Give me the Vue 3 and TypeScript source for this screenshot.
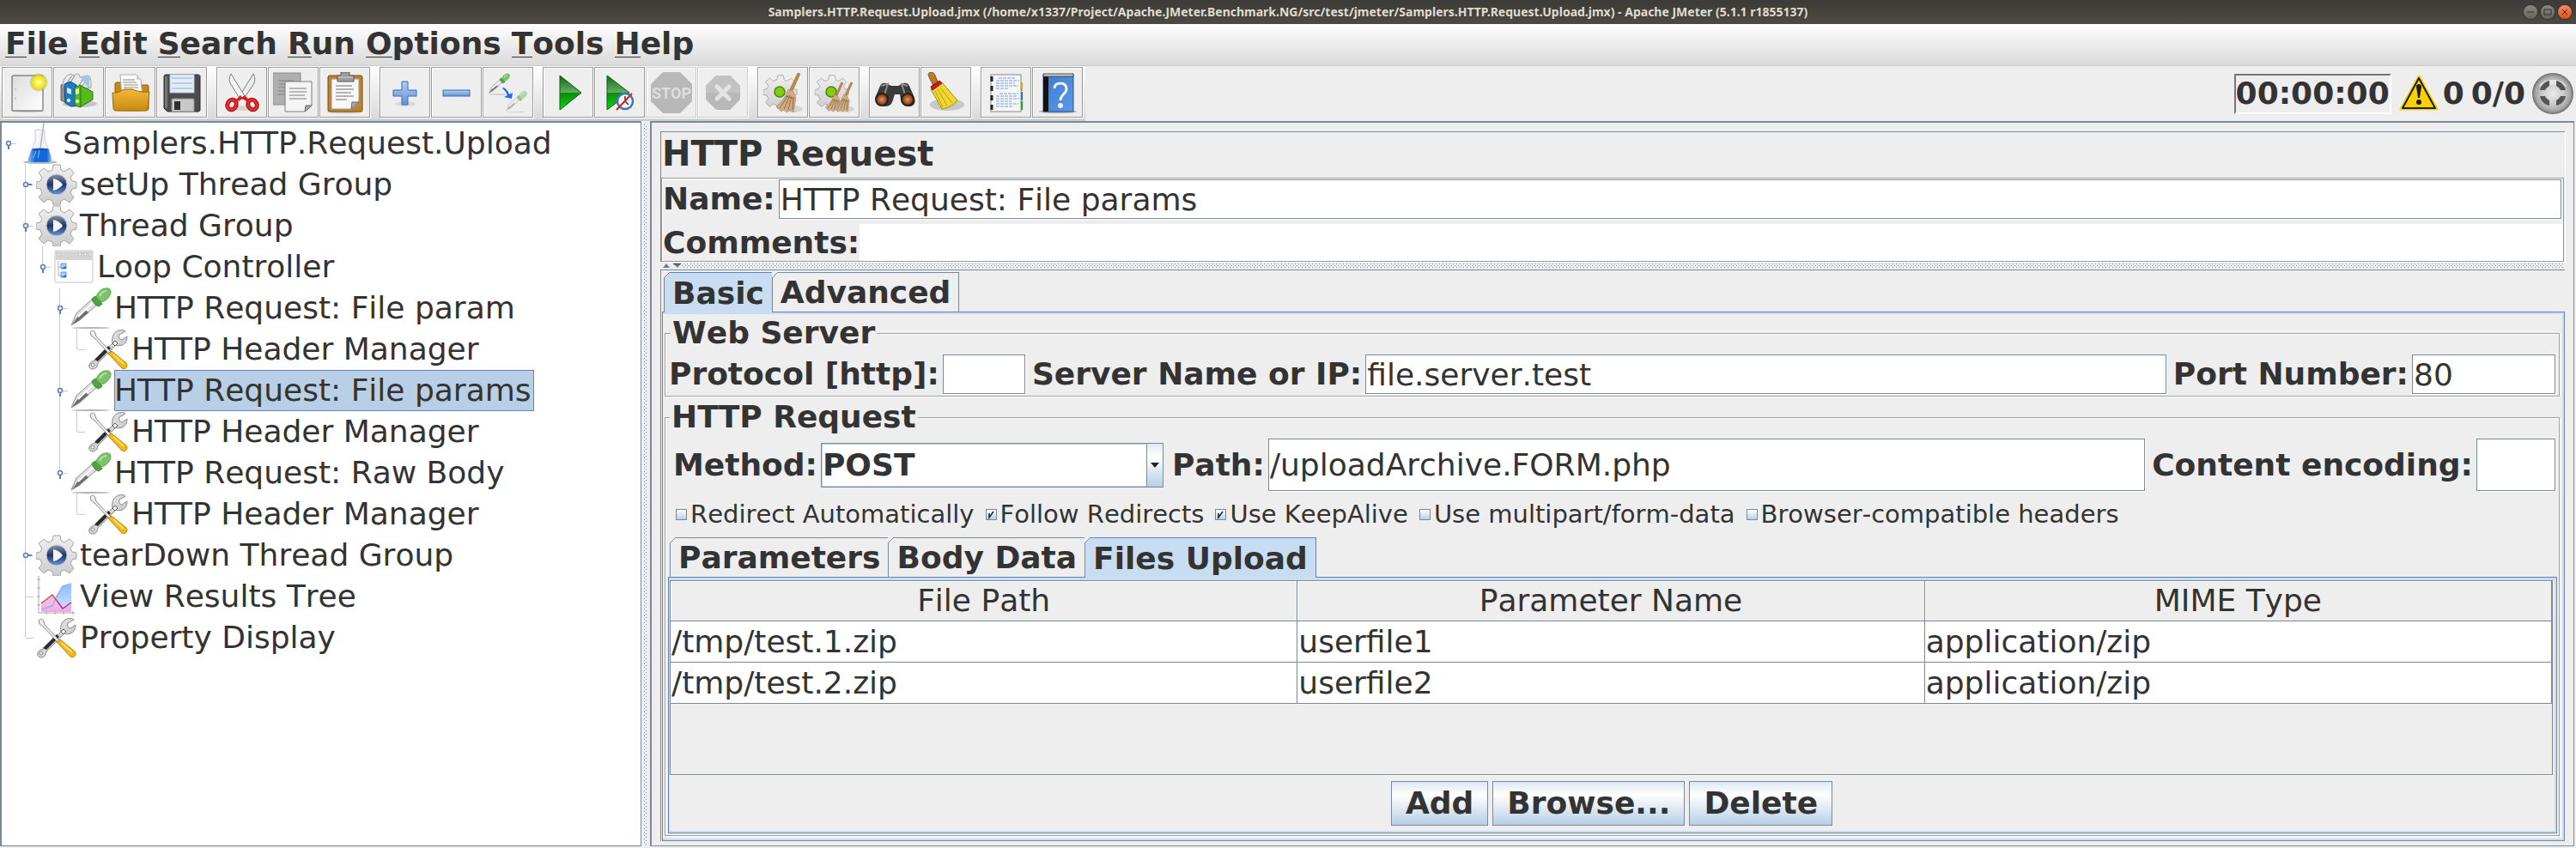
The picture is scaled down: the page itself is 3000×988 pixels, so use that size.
<script setup lang="ts">
import { computed, ref } from 'vue'

interface TreeNode {
  label: string
  depth: number
  icon: string
  handle?: 'open' | 'closed'
}

interface Tool {
  id: string
  title: string
  disabled?: boolean
}

const title =
  'Samplers.HTTP.Request.Upload.jmx (/home/x1337/Project/Apache.JMeter.Benchmark.NG/src/test/jmeter/Samplers.HTTP.Request.Upload.jmx) - Apache JMeter (5.1.1 r1855137)'

const menus = ['File', 'Edit', 'Search', 'Run', 'Options', 'Tools', 'Help']

const toolGroups: Tool[][] = [
  [
    { id: 'new', title: 'New' },
    { id: 'templates', title: 'Templates' },
    { id: 'open', title: 'Open' },
    { id: 'save', title: 'Save' },
  ],
  [
    { id: 'cut', title: 'Cut' },
    { id: 'copy', title: 'Copy' },
    { id: 'paste', title: 'Paste' },
  ],
  [
    { id: 'expand', title: 'Expand All' },
    { id: 'collapse', title: 'Collapse All' },
    { id: 'toggle', title: 'Toggle' },
  ],
  [
    { id: 'start', title: 'Start' },
    { id: 'start-nt', title: 'Start no pauses' },
    { id: 'stop', title: 'Stop', disabled: true },
    { id: 'shutdown', title: 'Shutdown', disabled: true },
  ],
  [
    { id: 'clear', title: 'Clear' },
    { id: 'clear-all', title: 'Clear All' },
  ],
  [
    { id: 'search', title: 'Search' },
    { id: 'reset', title: 'Reset Search' },
  ],
  [
    { id: 'functions', title: 'Function Helper Dialog' },
    { id: 'help', title: 'Help' },
  ],
]

const nodes: TreeNode[] = [
  { label: 'Samplers.HTTP.Request.Upload', depth: 0, icon: 'flask', handle: 'open' },
  { label: 'setUp Thread Group', depth: 1, icon: 'gear', handle: 'closed' },
  { label: 'Thread Group', depth: 1, icon: 'gear', handle: 'open' },
  { label: 'Loop Controller', depth: 2, icon: 'loop', handle: 'open' },
  { label: 'HTTP Request: File param', depth: 3, icon: 'dropper', handle: 'open' },
  { label: 'HTTP Header Manager', depth: 4, icon: 'wrench' },
  { label: 'HTTP Request: File params', depth: 3, icon: 'dropper', handle: 'open' },
  { label: 'HTTP Header Manager', depth: 4, icon: 'wrench' },
  { label: 'HTTP Request: Raw Body', depth: 3, icon: 'dropper', handle: 'open' },
  { label: 'HTTP Header Manager', depth: 4, icon: 'wrench' },
  { label: 'tearDown Thread Group', depth: 1, icon: 'gear', handle: 'closed' },
  { label: 'View Results Tree', depth: 1, icon: 'chart' },
  { label: 'Property Display', depth: 1, icon: 'wrench' },
]

const selected = ref(6)

// True when a sibling of the branch at this level follows further down the tree.
function continues(index: number, level: number): boolean {
  for (let i = index + 1; i < nodes.length; i++) {
    if (nodes[i].depth < level) return false
    if (nodes[i].depth === level) return true
  }
  return false
}

// End of the vertical guide in each indent column; 0 leaves the column empty.
const rows = computed(() =>
  nodes.map((node, index) => ({
    ...node,
    guides: Array.from({ length: node.depth + 1 }, (_, level) => {
      if (level === 0) return 0
      if (continues(index, level)) return 48
      return level === node.depth ? 24 : 0
    }),
  })),
)

const name = ref('HTTP Request: File params')
const comments = ref('')
const protocol = ref('')
const server = ref('file.server.test')
const port = ref('80')
const method = ref('POST')
const path = ref('/uploadArchive.FORM.php')
const encoding = ref('')

const options = ref([
  { id: 'redirect', label: 'Redirect Automatically', checked: false },
  { id: 'follow', label: 'Follow Redirects', checked: true },
  { id: 'keepalive', label: 'Use KeepAlive', checked: true },
  { id: 'multipart', label: 'Use multipart/form-data', checked: false },
  { id: 'browser', label: 'Browser-compatible headers', checked: false },
])

const mainTabs = ['Basic', 'Advanced']
const mainTab = ref('Basic')
const dataTabs = ['Parameters', 'Body Data', 'Files Upload']
const dataTab = ref('Files Upload')

const columns = ['File Path', 'Parameter Name', 'MIME Type']
const files = [
  ['/tmp/test.1.zip', 'userfile1', 'application/zip'],
  ['/tmp/test.2.zip', 'userfile2', 'application/zip'],
]
</script>

<template>
  <div class="window">
    <svg class="defs" aria-hidden="true">
      <defs>
        <linearGradient id="g-paper" x1="0" y1="0" x2="1" y2="1">
          <stop offset="0" stop-color="#dcdcdc" /><stop offset="1" stop-color="#fff" />
        </linearGradient>
        <radialGradient id="g-sun">
          <stop offset="0" stop-color="#fff" /><stop offset=".35" stop-color="#fdf53a" />
          <stop offset=".7" stop-color="#e8dc20" /><stop offset="1" stop-color="#8a8a60" stop-opacity="0" />
        </radialGradient>
        <linearGradient id="g-folder" x1="0" y1="0" x2="0" y2="1">
          <stop offset="0" stop-color="#f2b83c" /><stop offset="1" stop-color="#c98a0c" />
        </linearGradient>
        <linearGradient id="g-blue" x1="0" y1="0" x2="0" y2="1">
          <stop offset="0" stop-color="#b4cdec" /><stop offset="1" stop-color="#5f94d4" />
        </linearGradient>
        <linearGradient id="g-green" x1="0" y1="0" x2="0" y2="1">
          <stop offset="0" stop-color="#0d6b16" /><stop offset=".49" stop-color="#5fae5f" />
          <stop offset=".5" stop-color="#0a8a0f" /><stop offset="1" stop-color="#12d40c" />
        </linearGradient>
        <linearGradient id="g-metal" x1="0" y1="0" x2="1" y2="1">
          <stop offset="0" stop-color="#f8f8f8" /><stop offset="1" stop-color="#b4b4b4" />
        </linearGradient>
        <linearGradient id="g-cog" x1="0" y1="0" x2="0" y2="1">
          <stop offset="0" stop-color="#f0f0f0" /><stop offset="1" stop-color="#cccccc" />
        </linearGradient>
        <linearGradient id="g-navy" x1="0" y1="0" x2="0" y2="1">
          <stop offset="0" stop-color="#8c94a8" /><stop offset=".5" stop-color="#1c3468" />
          <stop offset="1" stop-color="#6c98dc" />
        </linearGradient>
        <linearGradient id="g-area" x1="0" y1="0" x2="0" y2="1">
          <stop offset="0" stop-color="#8cbcff" /><stop offset="1" stop-color="#d4e8ff" />
        </linearGradient>
        <linearGradient id="g-pink" x1="0" y1="0" x2="0" y2="1">
          <stop offset="0" stop-color="#f8c8d8" /><stop offset="1" stop-color="#f4a8f0" />
        </linearGradient>
        <radialGradient id="g-disc" cx=".5" cy=".5" r=".5">
          <stop offset="0" stop-color="#ececec" /><stop offset=".6" stop-color="#c4c4c4" />
          <stop offset=".85" stop-color="#a4a4a4" /><stop offset="1" stop-color="#6c6c6c" />
        </radialGradient>
        <linearGradient id="g-liquid" x1="0" y1="0" x2="1" y2="0">
          <stop offset="0" stop-color="#8cbcf4" /><stop offset=".3" stop-color="#1468dc" />
          <stop offset=".8" stop-color="#1468dc" /><stop offset="1" stop-color="#8cbcf4" />
        </linearGradient>
        <radialGradient id="g-lens">
          <stop offset="0" stop-color="#e89058" /><stop offset="1" stop-color="#7a2c0c" />
        </radialGradient>
        <linearGradient id="g-book" x1="0" y1="0" x2="1" y2="1">
          <stop offset="0" stop-color="#3a7ad0" /><stop offset="1" stop-color="#5c9ae8" />
        </linearGradient>
      </defs>

      <symbol id="i-cog" viewBox="0 0 48 48">
        <path d="M20 1h8l1 6 4 2 6-4 5 5-4 6 2 4 5 1v7l-5 1-2 5 4 5-5 6-6-4-4 2-1 5h-8l-1-5-5-2-5 4-6-6 4-5-2-5-5-1v-7l5-1 2-4-4-6 6-5 5 4 5-2z" fill="url(#g-cog)" stroke="#a4a4a4" />
      </symbol>
      <symbol id="i-gear" viewBox="0 0 48 48">
        <use href="#i-cog" />
        <circle cx="24" cy="24" r="12" fill="url(#g-navy)" stroke="#c8ccd4" />
        <path d="M20 17c5 1 9 4 11 7-2 3-6 6-11 7z" fill="#f4f4f8" />
      </symbol>
      <symbol id="i-flask" viewBox="0 0 48 48">
        <ellipse cx="25" cy="46" rx="20" ry="2" fill="#b8b8b8" />
        <path d="M19 8h11v12l8 22c0 3-2 4-5 4H15c-3 0-5-1-4-4l8-22z" fill="#f0f3f6" stroke="#ccd2d8" />
        <path d="M15 31h20l3 11c0 3-2 4-5 4H15c-3 0-5-1-4-4z" fill="url(#g-liquid)" />
        <ellipse cx="25" cy="31" rx="10" ry="1.5" fill="#1458a8" />
        <path d="M29 0l-4 30" stroke="#b4b4b4" stroke-width="1.5" />
        <path d="M20 33l-3 8M24 32l-2 9" stroke="#8cc0ff" />
        <path d="M22 10v12" stroke="#fff" stroke-width="2" />
      </symbol>
      <symbol id="i-loop" viewBox="0 0 48 48">
        <rect x="2" y="5" width="44" height="37" rx="1" fill="#fff" stroke="#c4c4c4" />
        <path d="M3 6h42v10H3z" fill="#d4d4d4" />
        <path d="M5 8h4l-2 4zM29 8h4l-2 4zM35 8h4l-2 4zM41 8h4l-2 4z" fill="#f4f4f4" stroke="#aaa" stroke-width=".5" />
        <path d="M6 17v17h3M6 24h3" fill="none" stroke="#b4b4b4" />
        <path d="M9 20h6v6H9zM9 30h6v6H9z" fill="#a8ccf8" stroke="#6c9cd8" />
        <path d="M9 26l6-3v3zM9 36l6-3v3z" fill="#1c6cdc" />
      </symbol>
      <symbol id="i-dropper" viewBox="0 0 48 48">
        <ellipse cx="24" cy="47" rx="22" ry="1" fill="#b4b4b4" />
        <path d="M1 44l6-14 19-17 6 6-21 19z" fill="#e0e0e0" stroke="#8c8c8c" />
        <path d="M2 43l8-11 7-6 4 3-12 10z" fill="#6c6c6c" />
        <path d="M9 34l18-17" stroke="#fff" stroke-width="2" />
        <path d="M25 13l4-3 8 9-4 3c-4-1-7-5-8-9z" fill="#4ca440" stroke="#3a8c32" />
        <path d="M30 11c2-6 7-11 14-10 3 1 4 4 2 8-2 4-6 7-10 8z" fill="#7cc46c" stroke="#5aa44c" />
        <path d="M34 10c2-4 5-6 8-6" stroke="#b8e0ac" stroke-width="2" fill="none" />
      </symbol>
      <symbol id="i-wrench" viewBox="0 0 48 48">
        <path d="M2 42c1-3 4-5 7-5l20-20c-1-5 0-11 5-14 4-2 8-2 10 0l-7 4c-1 3 0 5 3 6l6-4c0 5-2 9-6 10-3 1-5 1-7 0L12 40c0 4-3 7-6 7-3 0-5-2-4-5z" fill="url(#g-metal)" stroke="#888" />
        <path d="M8 36l16-16 3 3-15 15z" fill="#2c2c2c" />
        <path d="M29 17l3-3 3 3-3 3z" fill="#fff" stroke="#555" />
        <circle cx="6" cy="42" r="2" fill="#fff" stroke="#888" />
        <path d="M3 4c2-3 5-2 6 1l1 4 17 18-2 2L8 11 4 8z" fill="#ececec" stroke="#8c8c8c" />
        <path d="M24 29l4-3 17 14c3 4-1 8-5 6z" fill="#f4b814" stroke="#b88408" />
        <path d="M30 30l12 11" stroke="#fce070" stroke-width="2" />
      </symbol>
      <symbol id="i-chart" viewBox="0 0 48 48">
        <path d="M6 40l13-6 5-12 8-10 9-2v32H6z" fill="url(#g-area)" />
        <path d="M6 32l13-10 12 16 10-7v11H6z" fill="url(#g-pink)" />
        <path d="M6 39l13-4 5-11 7-12 10-3" fill="none" stroke="#8cb4f4" stroke-width="1.5" />
        <path d="M6 32l13-10 6 8" fill="none" stroke="#d04868" stroke-width="1.5" />
        <path d="M25 30l6 8 10-7" fill="none" stroke="#b828a0" stroke-width="1.5" />
        <path d="M3 0v43h42M1 4h4M1 14h4M1 24h4M1 34h4M12 41v4M22 41v4M32 41v4M43 41v4" fill="none" stroke="#a8a8a8" />
      </symbol>

      <symbol id="i-new" viewBox="0 0 48 48">
        <ellipse cx="24" cy="45" rx="19" ry="2" fill="#ccc" />
        <rect x="6" y="4" width="36" height="41" rx="1" fill="url(#g-paper)" stroke="#555" />
        <path d="M10 19v3M10 29v3" stroke="#bbb" />
        <circle cx="37" cy="12" r="11" fill="url(#g-sun)" />
      </symbol>
      <symbol id="i-templates" viewBox="0 0 48 48">
        <ellipse cx="25" cy="37" rx="20" ry="4" fill="#c4c4c4" />
        <path d="M3 15l5-2v22l-5-2z" fill="#8a8f96" stroke="#666" />
        <path d="M5 13c3-10 9-13 13-9 4-4 7-1 7 2l9-2c4 1 4 6 4 14l-14 3-18-4z" fill="#e8e8e8" stroke="#9c9c9c" />
        <path d="M9 14l7-10M13 14l6-10M24 16l5-9M28 16l6-9M33 16l3-8" stroke="#888" />
        <path d="M26 6l10-1v16z" fill="#9cc8e8" />
        <path d="M7 14l7-3 7 4v24l-6 1-7-4z" fill="#1b7cc4" stroke="#0c4c84" />
        <path d="M10 18l5 2v6l-5-2z" fill="#cfe6f8" /><circle cx="12" cy="33" r="2" fill="#fff" />
        <path d="M19 18l6-3 15 8v9l-15 9-6-3z" fill="#54bc1c" stroke="#2c7408" />
        <path d="M26 16v25" stroke="#2c7408" />
        <path d="M20 20l4-1v6l-4 1z" fill="#dff4cc" /><circle cx="22" cy="34" r="2" fill="#fff" />
      </symbol>
      <symbol id="i-open" viewBox="0 0 48 48">
        <ellipse cx="25" cy="44" rx="21" ry="2" fill="#bbb" />
        <path d="M6 14c0-2 2-2 3-2h7l3 3h24c2 0 2 1 2 3v25H6z" fill="#c48a18" stroke="#8a5c08" />
        <path d="M12 3h19l5 6 2 20H14z" fill="#fafafa" stroke="#aaa" />
        <path d="M31 3v6h5z" fill="#d0d0d0" />
        <path d="M15 9h14M15 12h16M16 15h17M16 18h17" stroke="#8c8c8c" />
        <path d="M3 24c8 1 10-3 14-4h9c5 2 12 4 20 3l-2 20c0 2-1 2-3 2H7c-2 0-3-1-3-3z" fill="url(#g-folder)" stroke="#9c6a08" />
      </symbol>
      <symbol id="i-save" viewBox="0 0 48 48">
        <path d="M3 5c0-1 1-2 2-2h38c1 0 2 1 2 2v39c0 1-1 2-2 2H7l-4-4z" fill="#4c4a4c" stroke="#2f2f2f" />
        <path d="M4 5h3v37H4z" fill="#777" />
        <rect x="10" y="3" width="28" height="21" fill="#e4ecf8" stroke="#b4c4d8" />
        <path d="M12 7h24M12 13h24M12 19h24" stroke="#90acd0" />
        <rect x="12" y="31" width="26" height="15" rx="1" fill="#c8c8c8" stroke="#8c8c8c" />
        <rect x="15" y="34" width="7" height="10" fill="#303030" />
      </symbol>
      <symbol id="i-cut" viewBox="0 0 48 48">
        <ellipse cx="24" cy="42" rx="16" ry="3" fill="#d4d4d4" />
        <path d="M37 2c3 6 2 10-1 14L25 32l-4-4z" fill="#ececec" stroke="#7c7c7c" />
        <path d="M11 2c-3 6-2 10 1 14l10 16 5-4z" fill="#f4f4f4" stroke="#7c7c7c" />
        <g fill="none">
          <ellipse cx="12" cy="38" rx="5" ry="6" stroke="#a80c0c" stroke-width="5" transform="rotate(28 12 38)" />
          <ellipse cx="36" cy="38" rx="5" ry="6" stroke="#a80c0c" stroke-width="5" transform="rotate(-28 36 38)" />
          <ellipse cx="12" cy="38" rx="5" ry="6" stroke="#e02c2c" stroke-width="3" transform="rotate(28 12 38)" />
          <ellipse cx="36" cy="38" rx="5" ry="6" stroke="#e02c2c" stroke-width="3" transform="rotate(-28 36 38)" />
        </g>
        <path d="M17 32l5-5 2 2 3-2 5 5-3 2-5-3-4 3z" fill="#d42020" />
        <circle cx="24" cy="28" r="1" fill="#fff" />
      </symbol>
      <symbol id="i-copy" viewBox="0 0 48 48">
        <rect x="0" y="1" width="32" height="37" fill="#b0b0b0" stroke="#8c8c8c" />
        <path d="M6 10h18M6 14h12M6 18h12M6 22h12M6 26h10" stroke="#989898" stroke-width="2" />
        <path d="M14 11h31v28l-8 7H14z" fill="#f4f4f4" stroke="#7c7c7c" />
        <path d="M19 19h20M19 23h20M19 27h18M19 31h20" stroke="#b8b8b8" stroke-width="2" />
        <path d="M37 46l1-7h7z" fill="#aaa" stroke="#666" />
      </symbol>
      <symbol id="i-paste" viewBox="0 0 48 48">
        <ellipse cx="24" cy="46" rx="21" ry="2" fill="#c4c4c4" />
        <rect x="4" y="4" width="40" height="42" rx="2" fill="#c0812c" stroke="#7c4a0c" />
        <path d="M8 8h32v28l-8 7H8z" fill="#f8f8f8" stroke="#999" />
        <path d="M13 16h19M13 20h21M13 24h18M13 28h21M13 32h13" stroke="#b4b4b4" stroke-width="2" />
        <path d="M31 43l1-8h8z" fill="#aaa" stroke="#666" />
        <path d="M15 4h4V0h10v4h5v7H15z" fill="#9c9c94" stroke="#5c5c58" />
        <path d="M16 6h17" stroke="#d8d8d4" />
      </symbol>
      <symbol id="i-expand" viewBox="0 0 48 48">
        <ellipse cx="24" cy="37" rx="12" ry="3" fill="#d8d8d8" />
        <path d="M20 11h7v10h10v7H27v10h-7V28H10v-7h10z" fill="url(#g-blue)" stroke="#3c6cb0" />
      </symbol>
      <symbol id="i-collapse" viewBox="0 0 48 48">
        <rect x="8" y="21" width="31" height="7" fill="url(#g-blue)" stroke="#3c6cb0" />
      </symbol>
      <symbol id="i-toggle" viewBox="0 0 48 48">
        <use href="#i-dropper" x="1" y="1" width="25" height="26" />
        <g opacity=".55"><use href="#i-dropper" x="21" y="22" width="25" height="25" /></g>
        <path d="M18 18c3 1 6 4 7 8l4-2-1 7-9-2 4-2c-1-3-3-6-6-8z" fill="#1c6cf0" />
      </symbol>
      <symbol id="i-start" viewBox="0 0 48 48">
        <path d="M14 4l25 20-25 20z" fill="url(#g-green)" stroke="#0a5c10" />
      </symbol>
      <symbol id="i-start-nt" viewBox="0 0 48 48">
        <path d="M9 4l26 20L9 44z" fill="url(#g-green)" stroke="#0a5c10" />
        <circle cx="30" cy="34" r="9" fill="#f4f8fc" stroke="#3c78b8" stroke-width="2.5" />
        <path d="M30 34v-6M30 34l4 4" stroke="#333" stroke-width="1.5" />
        <path d="M20 44l18-19" stroke="#e01818" stroke-width="2" />
      </symbol>
      <symbol id="i-stop" viewBox="0 0 48 48">
        <path d="M14 0h20l14 14v20L34 48H14L0 34V14z" fill="#b8b8b8" />
      </symbol>
      <symbol id="i-shutdown" viewBox="0 0 48 48">
        <path d="M16 4h16l12 12v16L32 44H16L4 32V16z" fill="#b8b8b8" />
        <path d="M4 16L16 4h16l12 12v8H4z" fill="#c2c2c2" />
        <path d="M17 17l14 14M31 17L17 31" stroke="#e4e4e4" stroke-width="5" stroke-linecap="round" />
      </symbol>
      <symbol id="i-broom" viewBox="0 0 28 48">
        <path d="M25 1l3 1-9 20-3-2z" fill="#c08850" stroke="#8c6038" stroke-width=".5" />
        <path d="M14 20l6 3 3 7-3 17-4-3-4 3-3-3-3 2-6-6C6 36 11 29 14 20z" fill="#d0ac80" stroke="#8c6c48" stroke-width=".5" />
        <path d="M14 27L4 42M16 27l-7 16M18 28l-4 16M20 29l-1 15M11 28l10 3" fill="none" stroke="#8c6c48" />
      </symbol>
      <symbol id="i-clear" viewBox="0 0 48 48">
        <ellipse cx="36" cy="43" rx="11" ry="4" fill="#d4d4d4" />
        <use href="#i-cog" x="1" y="3" width="40" height="40" />
        <circle cx="20" cy="23" r="6" fill="#84cc14" stroke="#4c8408" stroke-width="1.5" />
        <use href="#i-broom" x="16" y="0" width="28" height="48" />
      </symbol>
      <symbol id="i-clear-all" viewBox="0 0 48 48">
        <ellipse cx="36" cy="43" rx="11" ry="4" fill="#d4d4d4" />
        <use href="#i-cog" x="1" y="3" width="40" height="40" />
        <circle cx="20" cy="23" r="6" fill="#84cc14" stroke="#4c8408" stroke-width="1.5" />
        <use href="#i-broom" x="13" y="11" width="21" height="36" />
        <use href="#i-broom" x="24" y="11" width="21" height="36" />
      </symbol>
      <symbol id="i-search" viewBox="0 0 48 48">
        <path d="M2 28l5-12c1-3 4-4 7-3l6 3h8l6-3c3-1 6 0 7 3l6 14c2 6-1 10-6 10s-9-3-10-8l-1-6h-6l-2 6c-1 5-4 8-9 8S0 34 2 28z" fill="#3a3a3a" />
        <path d="M8 16l8-2-4 12M39 16l-7-2 4 12" fill="none" stroke="#8c8c8c" stroke-width="2" />
        <circle cx="9" cy="32" r="7" fill="url(#g-lens)" stroke="#222" stroke-width="2" />
        <circle cx="39" cy="32" r="7" fill="url(#g-lens)" stroke="#222" stroke-width="2" />
      </symbol>
      <symbol id="i-reset" viewBox="0 0 48 48">
        <ellipse cx="25" cy="38" rx="20" ry="7" fill="#c8c8c8" />
        <path d="M4 1c3-2 6 0 7 3l4 10-5 3L5 8C4 5 2 3 4 1z" fill="#c07c24" stroke="#7c480c" />
        <path d="M6 20l13-8 18 21c-4 5-11 9-18 10z" fill="#f0d830" stroke="#a08c10" />
        <path d="M6 17l10-7 3 3-11 8z" fill="#c81c28" stroke="#8c0c18" />
        <path d="M11 22l9 19M14 20l11 19M17 18l14 18" stroke="#b49c18" />
      </symbol>
      <symbol id="i-functions" viewBox="0 0 48 48">
        <path d="M38 12h5v10h-5z" fill="#e8b418" /><path d="M38 23h5v10h-5z" fill="#1c6ce8" /><path d="M38 34h5v10h-5z" fill="#18a018" />
        <rect x="6" y="3" width="35" height="43" fill="#f4f6f8" stroke="#888" />
        <path d="M15 7h20M12 10h27M12 13h22M12 16h26M12 19h14M16 25h22M12 28h25M12 31h27M12 34h18M12 37h26M12 40h20" stroke="#7c9ccc" stroke-dasharray="4 1" />
        <path d="M7 5v6M7 16v6M7 27v6M7 38v6" stroke="#222" stroke-width="3" />
      </symbol>
      <symbol id="i-help" viewBox="0 0 48 48">
        <ellipse cx="24" cy="46" rx="22" ry="2" fill="#b0b0b0" />
        <path d="M7 3h35v43H7z" fill="url(#g-book)" stroke="#2c4c84" />
        <path d="M7 3h6v43H7z" fill="#141414" />
        <path d="M7 2h35v3H7z" fill="#d0d4d8" stroke="#444" />
        <path d="M20 19c0-4 3-6 7-6 5 0 7 3 7 7 0 5-7 6-7 13" fill="none" stroke="#eef4fc" stroke-width="3" />
        <circle cx="27" cy="39" r="3" fill="#eef4fc" />
      </symbol>
      <symbol id="i-warn" viewBox="0 0 48 48">
        <path d="M24 4l21 38H3z" fill="#f0d800" stroke="#f0d800" stroke-width="3" stroke-linejoin="round" />
        <path d="M24 6l19 35H5z" fill="#fad000" stroke="#1c1c1c" stroke-width="2" stroke-linejoin="round" />
        <path d="M21 16c0-4 6-4 6 0l-2 13h-2z" fill="#1c1c1c" />
        <circle cx="24" cy="34" r="3" fill="#1c1c1c" />
      </symbol>
      <symbol id="i-activity" viewBox="0 0 48 48">
        <circle cx="24" cy="24" r="24" fill="url(#g-disc)" />
        <path d="M8 16C12 5 36 5 40 16c-6-3-26-3-32 0z" fill="#f4f4f4" opacity=".7" />
        <path d="M20 9v6c-2 1-4 3-5 5H9c1-5 5-10 11-11zM28 9v6c2 1 4 3 5 5h6c-1-5-5-10-11-11zM20 38v-6c-2-1-4-3-5-5H9c1 5 5 10 11 11zM28 38v-6c2-1 4-3 5-5h6c-1 5-5 10-11 11z" fill="#555" />
      </symbol>
    </svg>

    <header class="titlebar">
      <h1 class="title">{{ title }}</h1>
      <div class="window-buttons">
        <button class="win-btn" type="button" aria-label="Minimize">
          <svg viewBox="0 0 16 16"><path d="M4 8h8" /></svg>
        </button>
        <button class="win-btn" type="button" aria-label="Maximize">
          <svg viewBox="0 0 16 16"><path d="M4 5h8v6H4z" /></svg>
        </button>
        <button class="win-btn close" type="button" aria-label="Close">
          <svg viewBox="0 0 16 16"><path d="M5 5l6 6M11 5l-6 6" /></svg>
        </button>
      </div>
    </header>

    <nav class="menubar" aria-label="Main menu">
      <button v-for="menu in menus" :key="menu" class="menu" type="button">
        <span class="mnemonic">{{ menu[0] }}</span>{{ menu.slice(1) }}
      </button>
    </nav>

    <div class="toolrow">
      <div class="toolbar" role="toolbar" aria-label="Tools">
        <div v-for="(group, g) in toolGroups" :key="g" class="tool-group">
          <button
            v-for="tool in group"
            :key="tool.id"
            class="tool"
            type="button"
            :aria-label="tool.title"
            :disabled="tool.disabled"
          >
            <svg class="icon" viewBox="0 0 48 48">
              <use :href="`#i-${tool.id}`" />
              <text v-if="tool.id === 'stop'" class="stop-text" x="24" y="31" text-anchor="middle">STOP</text>
            </svg>
          </button>
        </div>
      </div>
      <div class="status">
        <output class="timer">00:00:00</output>
        <button class="warn" type="button" aria-label="Log errors">
          <svg class="icon"><use href="#i-warn" /></svg><span>0</span>
        </button>
        <span>0/0</span>
        <svg class="icon"><use href="#i-activity" /></svg>
      </div>
    </div>

    <main class="split">
      <aside class="tree" role="tree" aria-label="Test plan">
        <div
          v-for="(row, i) in rows"
          :key="i"
          class="node"
          role="treeitem"
          :aria-level="row.depth + 1"
          :aria-selected="selected === i"
          @click="selected = i"
        >
          <svg v-for="(end, level) in row.guides" :key="level" class="guide" viewBox="0 0 20 48">
            <rect v-if="end" x="7" y="0" width="1" :height="end" fill="#b8cfe5" />
            <rect v-if="level === row.depth" x="8" y="24" width="9" height="1" fill="#b8cfe5" />
            <template v-if="level === row.depth && row.handle">
              <path v-if="row.handle === 'open'" d="M8 26v5" stroke="#5c7cc0" stroke-width="2" />
              <path v-else d="M10 24h5" stroke="#5c7cc0" stroke-width="2" />
              <circle cx="8" cy="24" r="2.5" fill="#fff" stroke="#5c7cc0" stroke-width="1.5" />
            </template>
          </svg>
          <svg class="icon"><use :href="`#i-${row.icon}`" /></svg>
          <span class="node-label" :class="{ selected: selected === i }">{{ row.label }}</span>
        </div>
      </aside>

      <div class="divider vertical" role="separator"></div>

      <section class="editor">
        <div class="head">
          <h2 class="heading">HTTP Request</h2>
          <div class="naming">
            <div class="field-row name-row">
              <label for="name">Name:</label>
              <input id="name" v-model="name" class="text grow" type="text" />
            </div>
            <div class="field-row comment-row">
              <label for="comments">Comments:</label>
              <input id="comments" v-model="comments" class="plain grow" type="text" />
            </div>
          </div>
        </div>

        <div class="divider horizontal" role="separator">
          <svg class="arrows" viewBox="0 0 22 7">
            <path d="M0 5l4-5 4 5z" fill="#5c7cc0" /><path d="M12 0h9l-4 5z" fill="#5c7cc0" /><path d="M12 0h9v1h-9z" fill="#333" />
          </svg>
        </div>

        <div class="config">
          <div class="tabs" role="tablist">
            <button
              v-for="tab in mainTabs"
              :key="tab"
              class="tab"
              :class="{ active: tab === mainTab }"
              type="button"
              role="tab"
              :aria-selected="tab === mainTab"
              @click="mainTab = tab"
            >{{ tab }}</button>
          </div>

          <div class="tabpanel outer" role="tabpanel">
            <fieldset class="group">
              <legend>Web Server</legend>
              <div class="server-row">
                <label for="protocol">Protocol [http]:</label>
                <input id="protocol" v-model="protocol" class="text protocol" type="text" />
                <label for="server">Server Name or IP:</label>
                <input id="server" v-model="server" class="text grow" type="text" />
                <label for="port">Port Number:</label>
                <input id="port" v-model="port" class="text port" type="text" />
              </div>
            </fieldset>

            <fieldset class="group request">
              <legend>HTTP Request</legend>
              <div class="path-row">
                <label for="method">Method:</label>
                <div class="combo">
                  <select id="method" v-model="method">
                    <option>GET</option>
                    <option>POST</option>
                    <option>PUT</option>
                    <option>DELETE</option>
                  </select>
                  <span class="combo-arrow"><svg viewBox="0 0 10 6"><path d="M0 0h10L5 6z" fill="#222" /></svg></span>
                </div>
                <label for="path">Path:</label>
                <input id="path" v-model="path" class="text tall grow" type="text" />
                <label for="encoding">Content encoding:</label>
                <input id="encoding" v-model="encoding" class="text tall encoding" type="text" />
              </div>

              <div class="checks">
                <label v-for="option in options" :key="option.id" class="check">
                  <input v-model="option.checked" type="checkbox" />
                  <svg class="tick" viewBox="0 0 13 13"><path d="M4 5v5l5-7" fill="none" stroke="#222" stroke-width="1.5" /></svg>
                  <span>{{ option.label }}</span>
                </label>
              </div>

              <div class="tabs data-tabs" role="tablist">
                <button
                  v-for="tab in dataTabs"
                  :key="tab"
                  class="tab"
                  :class="{ active: tab === dataTab }"
                  type="button"
                  role="tab"
                  :aria-selected="tab === dataTab"
                  @click="dataTab = tab"
                >{{ tab }}</button>
              </div>

              <div class="tabpanel inner" role="tabpanel">
                <div class="table-scroll">
                  <table>
                    <thead>
                      <tr><th v-for="column in columns" :key="column" scope="col">{{ column }}</th></tr>
                    </thead>
                    <tbody>
                      <tr v-for="file in files" :key="file[0]">
                        <td v-for="cell in file" :key="cell">{{ cell }}</td>
                      </tr>
                    </tbody>
                  </table>
                </div>
                <div class="actions">
                  <button class="btn" type="button">Add</button>
                  <button class="btn" type="button">Browse...</button>
                  <button class="btn" type="button">Delete</button>
                </div>
              </div>
            </fieldset>
          </div>
        </div>
      </section>
    </main>
  </div>
</template>

<style>
body {
  background: #eee;
}
</style>

<style scoped>
.window {
  --edge: #7a8a99;
  --accent: #6382bf;
  --light: #c8ddf2;
  display: flex;
  flex-direction: column;
  min-height: 100vh;
  box-sizing: border-box;
  background: #eee;
  color: #333;
  font: 700 36px/42px "DejaVu Sans", sans-serif;
  font-kerning: none;
  white-space: nowrap;
}

.window *,
.window *::before {
  box-sizing: border-box;
}

.defs {
  position: absolute;
  width: 0;
  height: 0;
}

button,
input,
select {
  margin: 0;
  padding: 0;
  border: 0;
  border-radius: 0;
  background: none;
  color: inherit;
  font: inherit;
  font-kerning: none;
}

.icon {
  display: block;
  flex: none;
  width: 48px;
  height: 48px;
}

.grow {
  flex: 1;
  min-width: 0;
}

.titlebar {
  display: flex;
  align-items: center;
  height: 28px;
  padding: 0 5px 0 61px;
  background: linear-gradient(#3c3b37, #4c4a43);
}

.title {
  flex: 1;
  margin: 0;
  color: #dfdbd2;
  font: 700 14px/20px "Noto Sans", sans-serif;
  text-align: center;
}

.window-buttons {
  display: flex;
  gap: 4px;
}

.win-btn {
  width: 16px;
  height: 16px;
  border-radius: 50%;
  background: linear-gradient(#8a8880, #64625c);
  box-shadow: 0 0 1px 1px #33322e;
}

.win-btn.close {
  background: linear-gradient(#f58a63, #df4f1c);
}

.win-btn svg {
  display: block;
  fill: none;
  stroke: #33322e;
}

.menubar {
  display: flex;
  gap: 12px;
  height: 49px;
  padding: 2px 6px 0;
  border-bottom: 1px solid #ccc;
  background: linear-gradient(#fff, #dadada);
}

.menu {
  display: flex;
  height: 42px;
}

.mnemonic {
  height: 37px;
  border-bottom: 1px solid #333;
}

.toolrow {
  display: flex;
  justify-content: space-between;
  height: 64px;
}

.toolbar {
  display: flex;
  gap: 10px;
  padding: 1px 2px 0;
  border-bottom: 2px solid #ccc;
  background: linear-gradient(#fff, #dadada);
}

.tool-group {
  display: flex;
}

.tool {
  display: grid;
  place-items: center;
  width: 59px;
  height: 59px;
  margin-right: 1px;
  border: 1px solid #999;
  background: #eee;
  box-shadow: 1px 1px 0 #fff, inset 1px 1px 0 #fff;
}

.tool:disabled {
  border-color: #ccc;
}

.stop-text {
  fill: #dedede;
  font: 700 18px Roboto, sans-serif;
}

.status {
  display: flex;
  align-items: center;
  gap: 8px;
  padding-right: 3px;
}

.timer {
  height: 47px;
  border: 2px solid;
  border-color: #777 #fff #fff #777;
  line-height: 42px;
}

.warn {
  display: flex;
  align-items: center;
  gap: 4px;
}

.split {
  display: grid;
  flex: 1;
  grid-template-columns: 748px 9px minmax(0, 1fr);
  padding: 0 2px 2px 0;
}

.tree {
  border: 2px solid var(--edge);
  border-right-width: 1px;
  border-bottom-width: 1px;
  margin-right: 1px;
  background: #fff;
  font-weight: 400;
}

.node {
  display: flex;
  height: 48px;
}

.guide {
  flex: none;
  width: 20px;
  height: 48px;
}

.node-label {
  margin-left: 3px;
  padding-right: 3px;
  line-height: 48px;
}

.node-label.selected {
  background: #b8cfe5;
  box-shadow: inset 0 0 0 1px var(--accent);
}

.divider {
  background-image:
    conic-gradient(from 270deg at 1px 1px, #7a8a99 90deg, transparent 0),
    conic-gradient(from 270deg at 1px 1px, #7a8a99 90deg, transparent 0);
  background-size: 4px 4px;
  background-position: 0 0, 2px 2px;
}

.divider.vertical {
  margin: 4px 3px 2px 2px;
}

.divider.horizontal {
  height: 5px;
  margin: 2px 2px 2px 3px;
}

.arrows {
  display: block;
  width: 22px;
  height: 7px;
  background: #eee;
}

.editor {
  display: flex;
  flex-direction: column;
  padding: 10px 10px 5px;
  border: solid var(--edge);
  border-width: 2px 1px 1px 2px;
}

.head {
  border: 1px solid var(--edge);
  border-width: 1px 0 0 1px;
  box-shadow: 1px 1px 0 #fff;
}

.heading {
  margin: 0;
  padding: 2px 1px 4px;
  font-size: 40px;
  line-height: 47px;
}

.naming {
  border: 1px solid #999;
  margin-right: 1px;
  box-shadow: inset 1px 1px 0 #fff;
}

.field-row {
  display: flex;
  align-items: center;
  padding-left: 1px;
}

.name-row {
  gap: 4px;
  padding: 1px 2px 0 1px;
}

.comment-row {
  margin-top: 6px;
}

.plain {
  height: 43px;
  background: #fff;
  font-weight: 400;
}

.text {
  height: 46px;
  padding: 0 1px;
  border: 1px solid var(--edge);
  background: #fff;
  box-shadow: 1px 1px 0 #fff;
  font-weight: 400;
}

.config {
  display: flex;
  flex: 1;
  flex-direction: column;
  padding: 2px 0 0 1px;
  border: solid var(--edge);
  border-width: 1px 0 0 1px;
}

.tabs {
  display: flex;
  position: relative;
  z-index: 1;
  margin: 0 0 -1px 2px;
}

.tab {
  position: relative;
  height: 47px;
  padding: 0 9px;
  border: 1px solid var(--edge);
  border-bottom: 0;
  line-height: 45px;
}

.tab + .tab {
  border-left: 0;
}

.tab:not(.active) {
  border-bottom: 1px solid var(--accent);
}

.tab::before {
  content: "";
  position: absolute;
  top: -1px;
  left: -1px;
  width: 7px;
  height: 7px;
  background: linear-gradient(135deg, #eee 46%, var(--edge) 46% 56%, transparent 56%);
}

.tab.active {
  border-color: var(--accent);
  background: var(--light);
}

.tabpanel {
  display: flex;
  flex: 1;
  flex-direction: column;
  border: 1px solid var(--edge);
  border-top-color: var(--accent);
  border-left-color: var(--accent);
}

.outer {
  padding: 3px 5px 5px 2px;
  box-shadow: inset 0 2px 0 var(--light), inset -2px -2px 0 var(--light);
}

.inner {
  padding: 3px 3px 2px 1px;
  box-shadow: inset 1px 3px 0 var(--light), inset -2px -2px 0 var(--light);
}

.group {
  min-width: 0;
  margin: 0;
  padding: 4px 4px 2px;
  border: 1px solid #a0a0a0;
  box-shadow: 1px 1px 0 #fff, inset 1px 1px 0 #fff;
}

.group legend {
  margin-left: 2px;
  padding: 0 2px;
  background: #eee;
}

.server-row,
.path-row {
  display: flex;
  align-items: center;
  gap: 4px;
}

.text.grow {
  margin-right: 4px;
}

.name-row .text.grow {
  margin-right: 0;
}

.protocol {
  width: 96px;
  margin-right: 4px;
}

.port {
  width: 167px;
}

.request {
  display: flex;
  flex: 1;
  flex-direction: column;
  margin-top: 3px;
  padding: 4px 2px 2px 3px;
}

.path-row {
  padding: 0 2px 0 6px;
}

.tall {
  height: 61px;
}

.encoding {
  width: 92px;
}

.combo {
  position: relative;
  margin-right: 6px;
}

.combo select {
  display: block;
  width: 399px;
  height: 52px;
  padding: 0 22px 0 1px;
  border: 1px solid var(--edge);
  appearance: none;
  background: #fff;
  box-shadow: inset 0 0 0 1px #b8cfe5;
}

.combo-arrow {
  display: grid;
  position: absolute;
  top: 1px;
  right: 1px;
  bottom: 1px;
  width: 19px;
  place-items: center;
  border-left: 1px solid var(--edge);
  background: linear-gradient(#dde8f3, #fff 30%, #b8cfe5);
  pointer-events: none;
}

.combo-arrow svg {
  width: 10px;
  height: 6px;
}

.checks {
  display: flex;
  gap: 13px;
  height: 54px;
  padding: 0 9px;
  font-size: 29px;
  font-weight: 400;
  line-height: 54px;
}

.check {
  display: flex;
  position: relative;
  align-items: center;
  gap: 4px;
}

.check input {
  width: 13px;
  height: 13px;
  border: 1px solid var(--edge);
  appearance: none;
  background: linear-gradient(#fff, #b8cfe5);
}

.tick {
  position: absolute;
  left: 0;
  width: 13px;
  height: 13px;
  visibility: hidden;
  pointer-events: none;
}

.check input:checked + .tick {
  visibility: visible;
}

.data-tabs {
  margin-left: 2px;
}

.table-scroll {
  flex: 1;
  border: 1px solid var(--edge);
  margin-right: 1px;
  box-shadow: 0 1px 0 #fff;
}

table {
  width: 100%;
  border-collapse: separate;
  border-spacing: 0;
  table-layout: fixed;
  font-weight: 400;
}

th,
td {
  height: 48px;
  padding: 0 1px;
  border: solid var(--edge);
  border-width: 0 1px 1px 0;
  line-height: 42px;
}

th {
  height: 47px;
  box-shadow: inset 1px 1px 0 #fff;
  font-weight: 400;
  text-align: center;
}

td {
  background: #fff;
}

.actions {
  display: flex;
  justify-content: center;
  gap: 5px;
  padding: 7px 0 6px;
}

.btn {
  height: 52px;
  padding: 0 16px;
  border: 1px solid var(--edge);
  background: linear-gradient(#dde8f3, #fff 30%, #b8cfe5);
}
</style>
